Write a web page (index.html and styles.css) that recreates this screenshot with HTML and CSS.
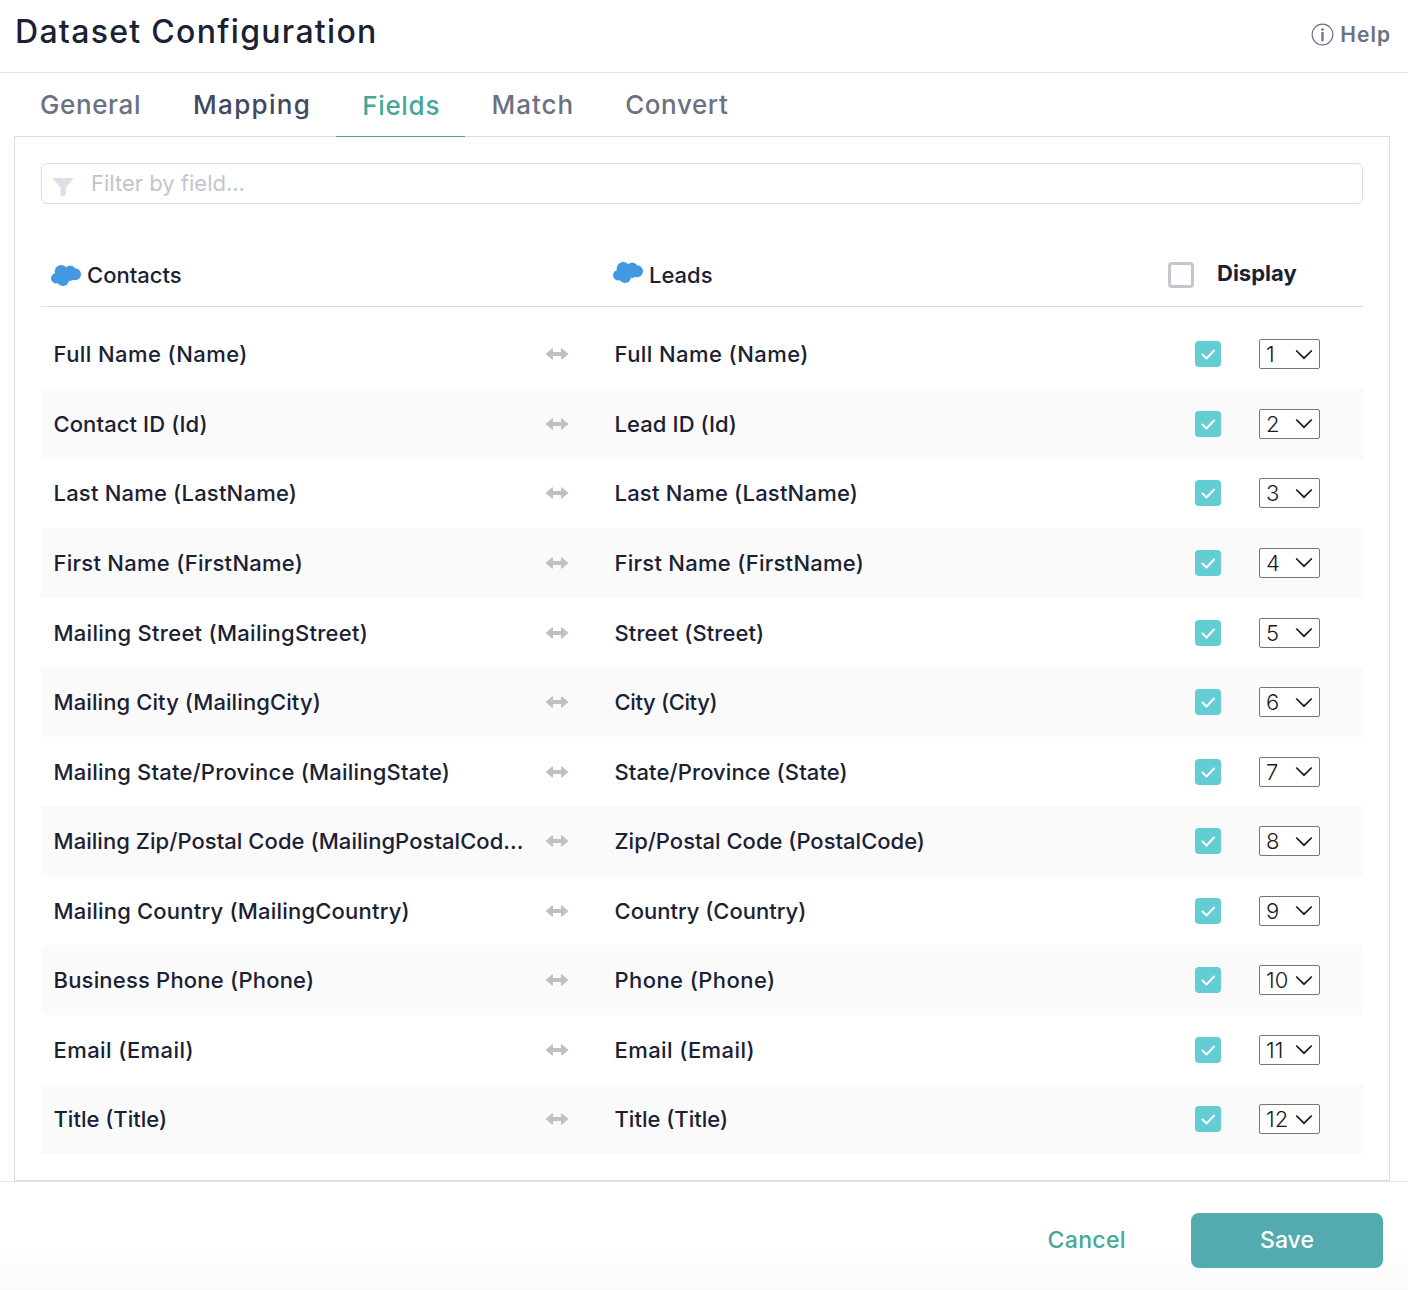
FILE: index.html
```html
<!DOCTYPE html>
<html lang="en">
<head>
<meta charset="utf-8">
<title>Dataset Configuration</title>
<link rel="stylesheet" href="styles.css">
</head>
<body>
<svg class="defs" width="0" height="0" aria-hidden="true">
  <symbol id="cloud" viewBox="0 0 30 21">
    <circle cx="5.300" cy="13.300" r="5.300"/>
    <circle cx="10.300" cy="6.800" r="6.700"/>
    <circle cx="19.300" cy="5.800" r="5.300"/>
    <circle cx="24" cy="9.300" r="6"/>
    <circle cx="12" cy="15" r="6"/>
    <circle cx="19" cy="11" r="5"/>
  </symbol>
  <symbol id="arrows" viewBox="0 0 24 14">
    <path d="M.5 7L7 1.500c.5-.4 1-.1 1 .5v3h8V2c0-.6.5-.9 1-.5L23.500 7 17 12.500c-.5.4-1 .1-1-.5V9H8v3c0 .6-.5.9-1 .5z"/>
  </symbol>
  <symbol id="check" viewBox="0 0 26 26">
    <path d="M7.500 13.500l4 4 7.500-8" fill="none" stroke="#fff" stroke-width="2" stroke-linecap="round" stroke-linejoin="round"/>
  </symbol>
  <symbol id="chev" viewBox="0 0 18 11">
    <path d="M1.200 1.500L9 9.200l7.800-7.700" fill="none" stroke="#1a1a1a" stroke-width="1.700"/>
  </symbol>
</svg>

<header class="topbar">
  <h1 class="title">Dataset Configuration</h1>
  <a class="help">
    <svg class="help-icon" viewBox="0 0 24 24"><circle cx="12" cy="12" r="10.800" fill="none" stroke="#6b7183" stroke-width="1.200"/><circle cx="12" cy="6.800" r="1.400" fill="#6b7183"/><rect x="10.800" y="9.500" width="2.400" height="9.500" fill="#6b7183"/></svg>
    <span>Help</span>
  </a>
</header>

<nav class="tabs">
  <span class="tab tab-general">General</span>
  <span class="tab tab-mapping">Mapping</span>
  <span class="tab tab-fields active">Fields</span>
  <span class="tab tab-match">Match</span>
  <span class="tab tab-convert">Convert</span>
</nav>

<main class="card">
  <div class="filter">
    <svg class="filter-icon" viewBox="0 0 22 19"><path d="M0 0h22l-8 9.500V17l-5.500 2V9.500z"/></svg>
    <span class="filter-text">Filter by field...</span>
  </div>

  <div class="head">
    <div class="head-src"><svg class="cloud"><use href="#cloud"/></svg><span>Contacts</span></div>
    <div class="head-dst"><svg class="cloud up"><use href="#cloud"/></svg><span>Leads</span></div>
    <div class="head-display"><span class="box-empty"></span><span class="display-label">Display</span></div>
  </div>

  <div class="rows">
    <div class="row"><span class="src ls-4">Full Name (Name)</span><svg class="arrows"><use href="#arrows"/></svg><span class="dst ls-4">Full Name (Name)</span><span class="cb"><svg><use href="#check"/></svg></span><span class="sel"><span>1</span><svg><use href="#chev"/></svg></span></div>
    <div class="row"><span class="src ls-1">Contact ID (Id)</span><svg class="arrows"><use href="#arrows"/></svg><span class="dst ls-1">Lead ID (Id)</span><span class="cb"><svg><use href="#check"/></svg></span><span class="sel"><span>2</span><svg><use href="#chev"/></svg></span></div>
    <div class="row"><span class="src">Last Name (LastName)</span><svg class="arrows"><use href="#arrows"/></svg><span class="dst">Last Name (LastName)</span><span class="cb"><svg><use href="#check"/></svg></span><span class="sel"><span>3</span><svg><use href="#chev"/></svg></span></div>
    <div class="row"><span class="src ls-3">First Name (FirstName)</span><svg class="arrows"><use href="#arrows"/></svg><span class="dst ls-3">First Name (FirstName)</span><span class="cb"><svg><use href="#check"/></svg></span><span class="sel"><span>4</span><svg><use href="#chev"/></svg></span></div>
    <div class="row"><span class="src ls-3">Mailing Street (MailingStreet)</span><svg class="arrows"><use href="#arrows"/></svg><span class="dst ls-1">Street (Street)</span><span class="cb"><svg><use href="#check"/></svg></span><span class="sel"><span>5</span><svg><use href="#chev"/></svg></span></div>
    <div class="row"><span class="src ls-1">Mailing City (MailingCity)</span><svg class="arrows"><use href="#arrows"/></svg><span class="dst ls-n">City (City)</span><span class="cb"><svg><use href="#check"/></svg></span><span class="sel"><span>6</span><svg><use href="#chev"/></svg></span></div>
    <div class="row"><span class="src">Mailing State/Province (MailingState)</span><svg class="arrows"><use href="#arrows"/></svg><span class="dst ls-1">State/Province (State)</span><span class="cb"><svg><use href="#check"/></svg></span><span class="sel"><span>7</span><svg><use href="#chev"/></svg></span></div>
    <div class="row"><span class="src ls-05">Mailing Zip/Postal Code (MailingPostalCod...</span><svg class="arrows"><use href="#arrows"/></svg><span class="dst ls-0">Zip/Postal Code (PostalCode)</span><span class="cb"><svg><use href="#check"/></svg></span><span class="sel"><span>8</span><svg><use href="#chev"/></svg></span></div>
    <div class="row"><span class="src">Mailing Country (MailingCountry)</span><svg class="arrows"><use href="#arrows"/></svg><span class="dst ls-0">Country (Country)</span><span class="cb"><svg><use href="#check"/></svg></span><span class="sel"><span>9</span><svg><use href="#chev"/></svg></span></div>
    <div class="row"><span class="src">Business Phone (Phone)</span><svg class="arrows"><use href="#arrows"/></svg><span class="dst ls-4">Phone (Phone)</span><span class="cb"><svg><use href="#check"/></svg></span><span class="sel"><span>10</span><svg><use href="#chev"/></svg></span></div>
    <div class="row"><span class="src ls-4">Email (Email)</span><svg class="arrows"><use href="#arrows"/></svg><span class="dst ls-4">Email (Email)</span><span class="cb"><svg><use href="#check"/></svg></span><span class="sel"><span>11</span><svg><use href="#chev"/></svg></span></div>
    <div class="row"><span class="src ls-0">Title (Title)</span><svg class="arrows"><use href="#arrows"/></svg><span class="dst ls-0">Title (Title)</span><span class="cb"><svg><use href="#check"/></svg></span><span class="sel"><span>12</span><svg><use href="#chev"/></svg></span></div>
  </div>
</main>

<footer class="footer">
  <span class="cancel">Cancel</span>
  <span class="save">Save</span>
</footer>
</body>
</html>
```
FILE: styles.css
```css
* { box-sizing: border-box; }
html, body { margin: 0; height: 1290px; overflow: hidden; }
body { background: #fff; font-family: Inter, "Open Sans", "Liberation Sans", sans-serif; color: #1b2134; }
.defs { display: block; height: 0; }

.topbar { height: 73px; border-bottom: 1px solid #e3e4ea; display: flex; align-items: center; justify-content: space-between; padding: 0 18px 8px 15px; }
.title { margin: 0; font-size: 32px; font-weight: 500; letter-spacing: 1.3px; line-height: 40px; }
.help { display: flex; align-items: center; gap: 6px; color: #6b7183; font-size: 21px; font-weight: 600; letter-spacing: 1px; margin: 5px -1px 0 0; }
.help-icon { width: 23px; height: 23px; }

.tabs { height: 63px; display: flex; padding-left: 14px; }
.tab { padding: 16px 26px 0; font-size: 26px; line-height: 32px; font-weight: 500; color: #6b7183; }
.tab-general { letter-spacing: .6px; }
.tab-mapping { color: #42495f; letter-spacing: 1.3px; margin-right: -1px; }
.tab-fields { letter-spacing: .7px; padding-right: 25.300px; margin-right: 0; }
.tab-match { letter-spacing: 1px; margin-right: -1px; }
.tab-convert { letter-spacing: .6px; }
.tab.active { color: #45a79a; border-bottom: 1px solid #45a79a; height: 64px; position: relative; z-index: 1; padding-top: 17px; }

.card { margin: 0 18px 0 14px; height: 1045px; border: 1px solid #dcdde2; padding: 26px 26px 0; }
.filter { height: 41px; border: 1px solid #dcdde2; border-radius: 6px; display: flex; align-items: center; padding-left: 10px; }
.filter-icon { width: 22px; height: 19px; fill: #dfe0e7; margin-top: 7px; }
.filter-text { margin-left: 17px; font-size: 22px; line-height: 38px; padding-bottom: 2px; color: #c3c5cc; }

.head { height: 103px; border-bottom: 1px solid #dcdde0; display: flex; font-size: 22px; font-weight: 500; margin-bottom: 12.575px; }
.head-src, .head-dst { display: flex; align-items: center; gap: 6px; padding-top: 40px; }
.head-src { width: 561px; padding-left: 10px; }
.head-dst { width: 545px; padding-left: 11px; }
.cloud { width: 30px; height: 21px; fill: #4299e1; margin-top: 1px; }
.cloud.up { margin-top: -5px; }
.head-display { display: flex; align-items: flex-start; padding-top: 56px; padding-left: 21px; }
.box-empty { width: 26px; height: 26px; border: 3px solid #c2c7cf; border-radius: 4px; margin-top: 2px; }
.display-label { font-weight: 700; margin-left: 23px; line-height: 26px; }

.rows { display: flex; flex-direction: column; }
.row { height: 69.55px; display: flex; align-items: center; padding-left: 12.500px; font-size: 22px; font-weight: 500; letter-spacing: .2px; color: #1b2134; }
.row:nth-child(even) { background: #fafafa; }
.ls-4 { letter-spacing: .42px; }
.ls-3 { letter-spacing: .27px; }
.ls-1 { letter-spacing: .1px; }
.ls-05 { letter-spacing: .05px; }
.ls-0 { letter-spacing: 0; }
.ls-n { letter-spacing: -.35px; }
.src { width: 492px; white-space: nowrap; }
.arrows { width: 24px; height: 14px; fill: #c0c0c0; margin-left: -1px; }
.dst { width: 580.500px; margin-left: 46px; white-space: nowrap; }
.cb { width: 26px; height: 26px; border-radius: 4px; background: #62ced3; }
.cb svg { display: block; width: 26px; height: 26px; }
.sel { width: 61px; height: 30px; border: 1px solid #767676; border-radius: 2px; background: #fff; margin-left: 38px; display: flex; align-items: center; justify-content: space-between; padding: 0 6px; font-size: 22px; font-weight: 300; letter-spacing: 0; color: #1a1a1a; }
.sel svg { width: 18px; height: 11px; }

.footer { height: 109px; border-top: 1px solid #e3e4ea; background: linear-gradient(#fff 60%, #fafafa); display: flex; align-items: center; justify-content: flex-end; padding: 8px 25px 0 0; }
.cancel { font-size: 23px; font-weight: 500; letter-spacing: .35px; color: #45a79a; margin-right: 65px; }
.save { width: 192px; height: 55px; background: #53abb0; border-radius: 8px; color: #fff; font-size: 23px; font-weight: 500; display: flex; align-items: center; justify-content: center; }
```
